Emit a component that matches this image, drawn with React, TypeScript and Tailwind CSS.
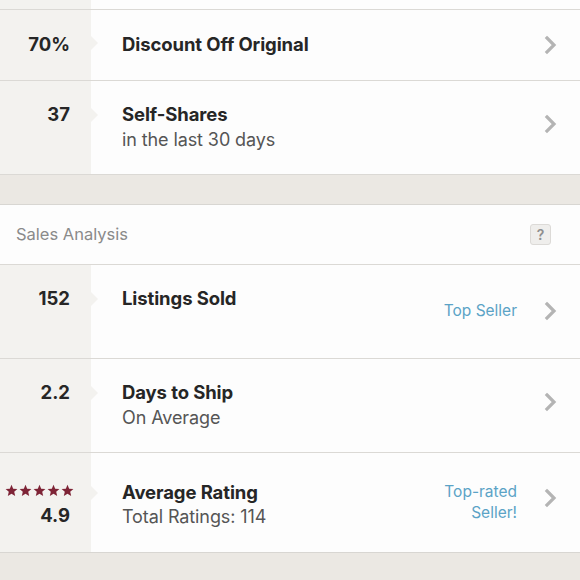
import { ReactNode } from 'react';

function Chevron() {
  return (
    <svg width="14" height="20" viewBox="0 0 14 20" className="shrink-0">
      <path d="M3 3 L10 10 L3 17" fill="none" stroke="#b4b4b4" strokeWidth="3.2" strokeLinecap="square" />
    </svg>
  );
}

function Stars() {
  return (
    <div className="flex gap-[1px]">
      {[0, 1, 2, 3, 4].map((i) => (
        <svg key={i} width="13" height="13" viewBox="0 0 24 24">
          <path d="M12 1.5l3.1 7.2 7.8.6-5.9 5.1 1.8 7.6L12 18l-6.8 4 1.8-7.6-5.9-5.1 7.8-.6z" fill="#7e2436" />
        </svg>
      ))}
    </div>
  );
}

type RowProps = {
  left: ReactNode;
  title: string;
  sub?: string;
  badge?: ReactNode;
  height: string;
};

function Row({ left, title, sub, badge, height }: RowProps) {
  return (
    <div className={`flex border-b border-[#dbd9d5] ${height}`}>
      <div className="relative w-[91px] shrink-0 bg-[#f3f2ef] flex flex-col items-end pr-[21px] pt-[21px]">
        {left}
        <div className="absolute right-[-7px] top-[27px] w-0 h-0 border-y-[7px] border-y-transparent border-l-[7px] border-l-[#f3f2ef]" />
      </div>
      <div className="flex-1 bg-[#fdfdfd] flex pl-[31px] pr-[22px] pt-[21px]">
        <div className="flex-1">
          <div className="text-[18.5px] font-bold text-[#262626] leading-[25px] tracking-[-0.1px]">{title}</div>
          {sub && <div className="text-[18px] text-[#555] leading-[25px] tracking-[-0.1px]">{sub}</div>}
        </div>
        {badge}
      </div>
    </div>
  );
}

export default function App() {
  return (
    <div className="w-[580px] h-[580px] overflow-hidden bg-[#ebe8e3] font-['Inter',sans-serif]">
      <div className="h-[10px] flex border-b border-[#dbd9d5]">
        <div className="w-[91px] bg-[#f3f2ef]" />
        <div className="flex-1 bg-[#fdfdfd]" />
      </div>
      <div className="flex border-b border-[#dbd9d5] h-[71px]">
        <div className="relative w-[91px] shrink-0 bg-[#f3f2ef] flex items-center justify-end pr-[21px]">
          <span className="text-[18.5px] font-bold text-[#262626]">70%</span>
          <div className="absolute right-[-7px] top-[26px] w-0 h-0 border-y-[7px] border-y-transparent border-l-[7px] border-l-[#f3f2ef]" />
        </div>
        <div className="flex-1 bg-[#fdfdfd] flex items-center pl-[31px] pr-[22px]">
          <span className="flex-1 text-[18.5px] font-bold text-[#262626] tracking-[-0.1px]">Discount Off Original</span>
          <Chevron />
        </div>
      </div>
      <Row
        height="h-[94px]"
        left={<span className="text-[18.5px] font-bold text-[#262626] leading-[25px]">37</span>}
        title="Self-Shares"
        sub="in the last 30 days"
        badge={<div className="self-start mt-[12px]"><Chevron /></div>}
      />
      <div className="h-[30px] border-b border-[#d8d6d2]" />
      <div className="h-[60px] bg-[#fdfdfd] border-b border-[#dbd9d5] flex items-center pl-[16px] pr-[29px]">
        <span className="flex-1 text-[16.5px] text-[#8a8a8a]">Sales Analysis</span>
        <div className="w-[21px] h-[21px] rounded-[3px] bg-[#efeeec] border border-[#dcdad7] flex items-center justify-center text-[14px] font-semibold text-[#8f8f8f]">
          ?
        </div>
      </div>
      <Row
        height="h-[94px]"
        left={<span className="text-[18.5px] font-bold text-[#262626] leading-[25px]">152</span>}
        title="Listings Sold"
        badge={
          <div className="self-start mt-[13px] flex items-center gap-[27px]">
            <span className="text-[15.5px] text-[#5ba3c6]">Top Seller</span>
            <Chevron />
          </div>
        }
      />
      <Row
        height="h-[94px]"
        left={<span className="text-[18.5px] font-bold text-[#262626] leading-[25px]">2.2</span>}
        title="Days to Ship"
        sub="On Average"
        badge={<div className="self-start mt-[12px]"><Chevron /></div>}
      />
      <div className="flex border-b border-[#d8d6d2] h-[100px]">
        <div className="relative w-[91px] shrink-0 bg-[#f3f2ef] flex flex-col items-end pr-[17px] pt-[31px]">
          <Stars />
          <span className="text-[18.5px] font-bold text-[#262626] leading-[25px] mt-[6px] mr-[4px]">4.9</span>
          <div className="absolute right-[-7px] top-[33px] w-0 h-0 border-y-[7px] border-y-transparent border-l-[7px] border-l-[#f3f2ef]" />
        </div>
        <div className="flex-1 bg-[#fdfdfd] flex pl-[31px] pr-[22px] pt-[27px]">
          <div className="flex-1">
            <div className="text-[18.5px] font-bold text-[#262626] leading-[25px] tracking-[-0.1px]">Average Rating</div>
            <div className="text-[18px] text-[#555] leading-[24px] tracking-[-0.1px]">Total Ratings: 114</div>
          </div>
          <div className="flex items-start gap-[27px]">
            <div className="text-right text-[15.5px] text-[#5ba3c6] leading-[21px] mt-[1px]">
              Top-rated
              <br />
              Seller!
            </div>
            <div className="mt-[8px]"><Chevron /></div>
          </div>
        </div>
      </div>
    </div>
  );
}
